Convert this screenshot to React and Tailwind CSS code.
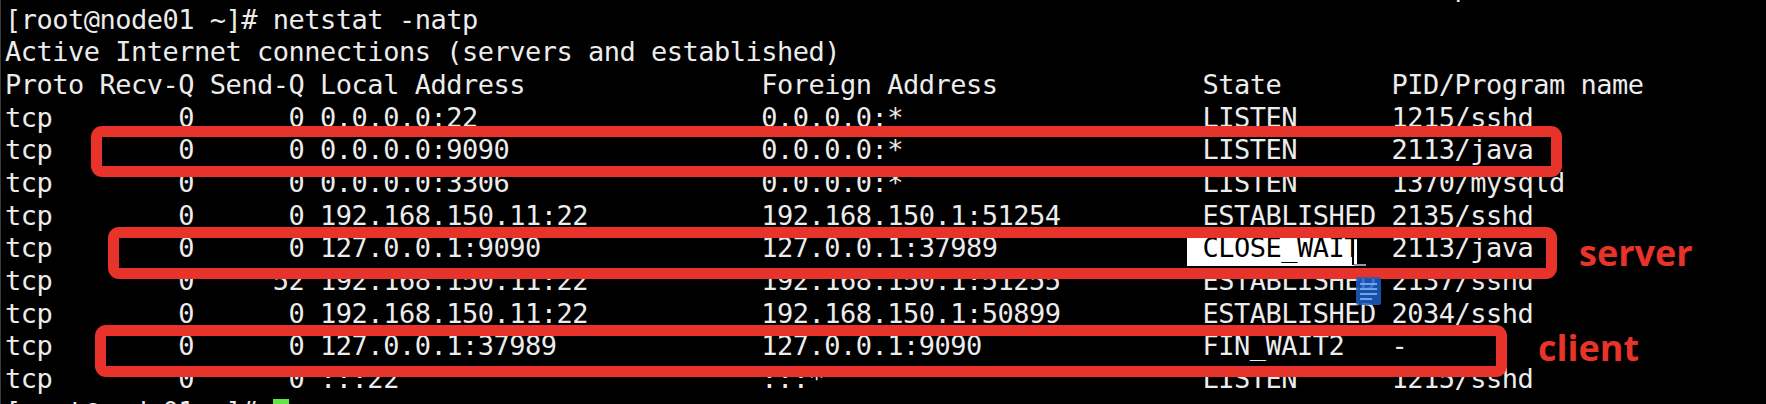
import React from 'react'

// netstat column layout: Proto(6) RecvQ(6) SendQ(6) Local(28) Foreign(28) State(12) PID
const row = (rq, sq, local, foreign, state, pid) =>
  'tcp'.padEnd(6) +
  String(rq).padStart(6) +
  ' ' +
  String(sq).padStart(6) +
  ' ' +
  local.padEnd(28) +
  foreign.padEnd(28) +
  state.padEnd(12) +
  pid

const header =
  'Proto Recv-Q Send-Q ' +
  'Local Address'.padEnd(28) +
  'Foreign Address'.padEnd(28) +
  'State'.padEnd(12) +
  'PID/Program name'

const lines = [
  '['.padEnd(92) + 'p',
  '[root@node01 ~]# netstat -natp',
  'Active Internet connections (servers and established)',
  header,
  row(0, 0, '0.0.0.0:22', '0.0.0.0:*', 'LISTEN', '1215/sshd'),
  row(0, 0, '0.0.0.0:9090', '0.0.0.0:*', 'LISTEN', '2113/java'),
  row(0, 0, '0.0.0.0:3306', '0.0.0.0:*', 'LISTEN', '1370/mysqld'),
  row(0, 0, '192.168.150.11:22', '192.168.150.1:51254', 'ESTABLISHED', '2135/sshd'),
  'CLOSE_WAIT_ROW',
  row(0, 52, '192.168.150.11:22', '192.168.150.1:51255', 'ESTABLISHED', '2137/sshd'),
  row(0, 0, '192.168.150.11:22', '192.168.150.1:50899', 'ESTABLISHED', '2034/sshd'),
  row(0, 0, '127.0.0.1:37989', '127.0.0.1:9090', 'FIN_WAIT2', '-'),
  row(0, 0, ':::22', ':::*', 'LISTEN', '1215/sshd'),
  'PROMPT_ROW',
]

const closeWait = row(0, 0, '127.0.0.1:9090', '127.0.0.1:37989', 'CLOSE_WAIT', '2113/java')

function Line({ text }) {
  if (text === 'CLOSE_WAIT_ROW') {
    return (
      <div>
        {closeWait.slice(0, 75)}
        <span className="relative">
          <span className="absolute left-0 right-[3px] top-[6px] h-[28px] bg-white" />
          <span className="relative text-black">{closeWait.slice(75, 86)}</span>
          {/* cursor i-beam left over the selection */}
          <span className="absolute right-[6px] top-[6px] h-[27px] w-[2px] bg-black" />
          <span className="absolute right-[-6px] top-[32px] h-[2px] w-[12px] bg-[#9a9a9a]" />
        </span>
        {closeWait.slice(86)}
      </div>
    )
  }
  if (text === 'PROMPT_ROW') {
    return (
      <div>
        {'[root@node01 ~]# '}
        <span className="inline-block align-top mt-[3px] w-[16px] h-[28px] bg-[#62e346]" />
      </div>
    )
  }
  return <div>{text}</div>
}

function Box({ className }) {
  return (
    <div
      className={
        'absolute border-[11px] border-[#e8332a] rounded-[11px] ' + className
      }
    />
  )
}

export default function App() {
  return (
    <div className="relative h-[404px] w-[1766px] overflow-hidden bg-black border-l border-[#3a3a3a]">
      {/* terminal text */}
      <div className="-mt-[29px] pl-[4px] font-['DejaVu_Sans_Mono',monospace] text-[27px] leading-[32.66px] tracking-[-0.5px] text-[#ececec] whitespace-pre">
        {lines.map((t, i) => (
          <Line key={i} text={t} />
        ))}
      </div>

      {/* hand drawn annotations */}
      <Box className="left-[90px] top-[126px] w-[1471px] h-[51px]" />
      <Box className="left-[107px] top-[227px] w-[1449px] h-[52px]" />
      <Box className="left-[94px] top-[325px] w-[1412px] h-[52px]" />

      <div className="absolute left-[1578px] top-[235px] font-['Open_Sans',sans-serif] font-bold text-[36px] leading-[36px] text-[#e8332a]">
        server
      </div>
      <div className="absolute left-[1537px] top-[330px] font-['Open_Sans',sans-serif] font-bold text-[36px] leading-[36px] text-[#e8332a]">
        client
      </div>

      {/* floating drag icon */}
      <svg className="absolute left-[1355px] top-[277px]" width="25" height="28" viewBox="0 0 25 28">
        <rect x="0" y="0" width="25" height="28" rx="2" fill="#1f5fc4" opacity="0.85" />
        <rect x="4" y="6" width="17" height="2" fill="#6aa6f0" />
        <rect x="4" y="11" width="17" height="2" fill="#6aa6f0" />
        <rect x="4" y="16" width="17" height="2" fill="#6aa6f0" />
        <rect x="4" y="21" width="12" height="2" fill="#6aa6f0" />
      </svg>
    </div>
  )
}
